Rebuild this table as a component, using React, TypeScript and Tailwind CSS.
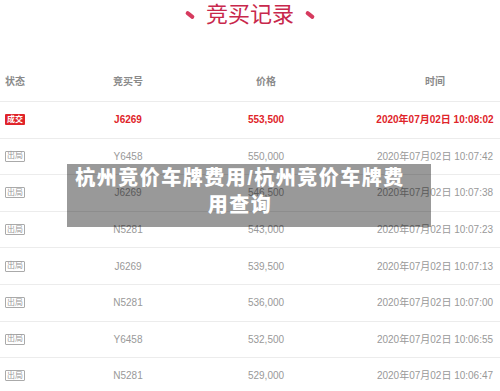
import React from 'react';

type Row = { status: 'win' | 'out'; no: string; price: string; time: string };

const rows: Row[] = [
  { status: 'win', no: 'J6269', price: '553,500', time: '2020年07月02日 10:08:02' },
  { status: 'out', no: 'Y6458', price: '550,000', time: '2020年07月02日 10:07:42' },
  { status: 'out', no: 'J6269', price: '546,500', time: '2020年07月02日 10:07:38' },
  { status: 'out', no: 'N5281', price: '543,000', time: '2020年07月02日 10:07:23' },
  { status: 'out', no: 'J6269', price: '539,500', time: '2020年07月02日 10:07:13' },
  { status: 'out', no: 'N5281', price: '536,000', time: '2020年07月02日 10:07:00' },
  { status: 'out', no: 'Y6458', price: '532,500', time: '2020年07月02日 10:06:55' },
  { status: 'out', no: 'N5281', price: '529,000', time: '2020年07月02日 10:06:47' },
];

const font = { fontFamily: '"Liberation Sans", "Noto Sans CJK SC", sans-serif' };

const Badge: React.FC<{ status: Row['status'] }> = ({ status }) =>
  status === 'win' ? (
    <span className="inline-flex items-center justify-center w-[20px] h-[11px] bg-[#e0242a] text-white text-[8px] leading-none rounded-[1px]">
      成交
    </span>
  ) : (
    <span className="inline-flex items-center justify-center w-[20px] h-[11px] border border-[#aaa] text-[#999] text-[8px] leading-none rounded-[1px]">
      出局
    </span>
  );

const App: React.FC = () => {
  return (
    <div className="relative w-[500px] h-[391px] overflow-hidden bg-white" style={font}>
      {/* title */}
      <div className="h-[29px] flex items-center justify-center gap-[11px]">
        <span className="w-[10px] h-[4px] rounded-full bg-[#d63a5e] rotate-[38deg]" />
        <span className="text-[22px] leading-none text-[#c8284c]">竞买记录</span>
        <span className="w-[10px] h-[4px] rounded-full bg-[#d63a5e] rotate-[38deg]" />
      </div>

      {/* table */}
      <div className="mt-[33px]">
        <div className="grid grid-cols-[30px_196px_80px_1fr] h-[40px] items-center border-b border-[#ececec] text-[10px] font-bold text-[#8a8a8a]">
          <div className="text-center">状态</div>
          <div className="text-center">竞买号</div>
          <div className="text-center">价格</div>
          <div className="text-center pl-16">时间</div>
        </div>
        {rows.map((r, i) => {
          const hot = i === 0;
          return (
            <div
              key={i}
              className={`grid grid-cols-[30px_196px_80px_1fr] h-[36.6px] items-center border-b border-[#ececec] text-[10px] ${
                hot ? 'text-[#e0242a] font-bold' : 'text-[#999]'
              }`}
            >
              <div className="flex justify-center">
                <Badge status={r.status} />
              </div>
              <div className="text-center">{r.no}</div>
              <div className="text-center">{r.price}</div>
              <div className="text-center pl-16 whitespace-nowrap">{r.time}</div>
            </div>
          );
        })}
      </div>

      {/* overlay caption */}
      <div className="absolute left-[67px] top-[164px] w-[364px] h-[63px] bg-black/40 pl-[4px] pr-[22px] pt-[1px]">
        <p className="text-center text-white font-black text-[20px] leading-[27px] tracking-[1.5px]">
          杭州竞价车牌费用/杭州竞价车牌费用查询
        </p>
      </div>
    </div>
  );
};

export default App;
